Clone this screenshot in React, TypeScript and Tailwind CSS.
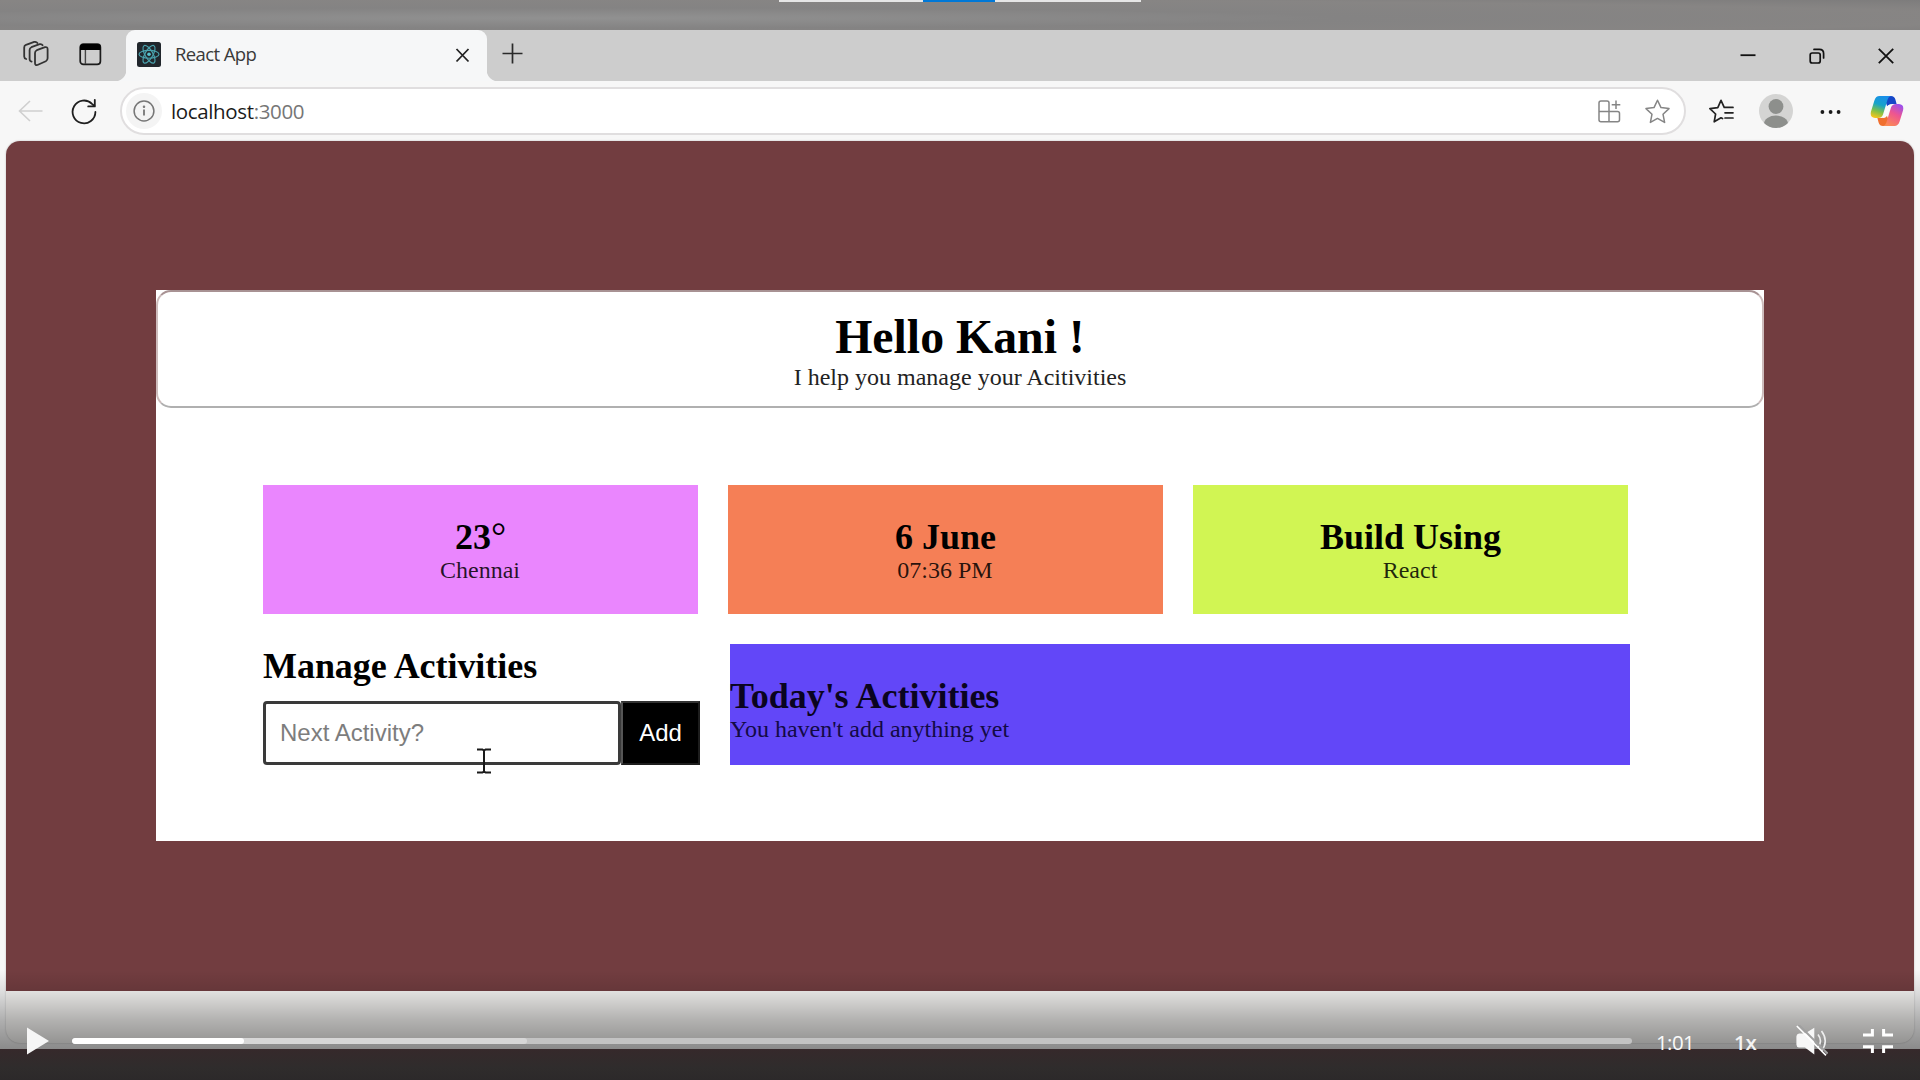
import React from "react";

const serif = "font-['Liberation_Serif',serif]";
const ui = "font-['Open_Sans',sans-serif]";

function WorkspacesIcon() {
  return (
    <svg width="26" height="26" viewBox="0 0 26 26" fill="none" stroke="#333" strokeWidth="1.8" strokeLinejoin="round" strokeLinecap="round">
      <path d="M13.8 9.2 L22 6.2 Q24.6 5.6 24.6 8.2 V17.2 Q24.6 19.2 22.8 20.2 L14.4 24 Q12 24.6 12 22 V12 Q12 10 13.8 9.2 Z" />
      <path d="M8.6 20.6 Q6.6 20.2 6.6 18 V9 Q6.6 7 8.4 6.2 L16.6 3.2 Q18.8 2.8 19.6 4.2" />
      <path d="M3.2 18 Q1.2 17.4 1.2 15.4 V6.4 Q1.2 4.6 3 3.8 L11.2 0.9 Q13.4 0.7 14.4 2" />
    </svg>
  );
}

function VerticalTabsIcon() {
  return (
    <svg width="23" height="23" viewBox="0 0 23 23" fill="none" stroke="#1c1c1c" strokeWidth="1.7">
      <rect x="1.2" y="1.2" width="20.2" height="20.2" rx="3.2" />
      <path d="M1 7 V4 Q1 1 4 1 H18.6 Q21.6 1 21.6 4 V7 Z" fill="#000" stroke="none" />
      <path d="M6.4 7 V21" stroke="#444" strokeWidth="1.4" />
    </svg>
  );
}

function ReactFavicon() {
  return (
    <svg width="24" height="25" viewBox="0 0 24 25">
      <rect width="24" height="25" rx="2.5" fill="#20262c" />
      <g fill="none" stroke="#4aa3ae" strokeWidth="1.15" transform="translate(12 12.3)">
        <ellipse rx="10" ry="3.9" />
        <ellipse rx="10" ry="3.9" transform="rotate(60)" />
        <ellipse rx="10" ry="3.9" transform="rotate(120)" />
        <circle r="1.8" fill="#58c4d0" stroke="none" />
      </g>
    </svg>
  );
}

function CopilotIcon() {
  return (
    <svg width="34" height="32" viewBox="0 0 34 32">
      <defs>
        <linearGradient id="cpA" x1="0.6" y1="0" x2="0.3" y2="1">
          <stop offset="0" stopColor="#1a8fea" />
          <stop offset="0.4" stopColor="#17a3c9" />
          <stop offset="0.7" stopColor="#7cc04a" />
          <stop offset="1" stopColor="#f5c51c" />
        </linearGradient>
        <linearGradient id="cpB" x1="0.8" y1="0" x2="0.3" y2="1">
          <stop offset="0" stopColor="#9a50ee" />
          <stop offset="0.45" stopColor="#ee5590" />
          <stop offset="1" stopColor="#fb8a55" />
        </linearGradient>
      </defs>
      <path d="M16 1 H21 Q24.5 1 25.4 4.5 L26.6 9 H22 Q18.5 9 17.4 12 L15 5 Z" fill="#1647c8" />
      <path d="M18 31 H13 Q9.6 31 8.6 27.5 L7.4 23 H12 Q15.5 23 16.6 20 L19 26 Z" fill="#f0702f" />
      <path d="M9.5 1 H21 Q18.6 1.4 17.6 4.6 L13 19.5 Q11.8 23 8 23 H5 Q-0.4 22.6 1 16.5 L4.4 5.4 Q5.8 1 9.5 1 Z" fill="url(#cpA)" />
      <path d="M24.5 31 H13 Q15.4 30.6 16.4 27.4 L21 12.5 Q22.2 9 26 9 H29 Q34.4 9.4 33 15.5 L29.6 26.6 Q28.2 31 24.5 31 Z" fill="url(#cpB)" />
      <path d="M17.2 11 Q18 9.4 21.6 9.4 L17 21 Q16 23 12.6 23 Z" fill="#fbfbfb" />
    </svg>
  );
}

function TabStrip() {
  return (
    <div className="flex h-[51px] shrink-0 items-stretch bg-[#cdcdcd]">
      <div className="flex w-[126px] items-center gap-[30px] pb-[3px] pl-[23px]">
        <WorkspacesIcon />
        <VerticalTabsIcon />
      </div>
      <div className="relative flex w-[361px] items-center rounded-t-[9px] bg-[#f6f7f8] pb-[3px] pl-[11px] pr-[16px]">
        <svg className="absolute -left-[8px] bottom-0" width="8" height="8"><path d="M8 0 V8 H0 Q6 6 8 0Z" fill="#f6f7f8" /></svg>
        <svg className="absolute -right-[8px] bottom-0" width="8" height="8"><path d="M0 0 V8 H8 Q2 6 0 0Z" fill="#f6f7f8" /></svg>
        <ReactFavicon />
        <span className={`${ui} ml-[14px] flex-1 text-[18.5px] leading-6 tracking-[-0.6px] text-[#3a3a3a]`}>React App</span>
        <svg width="17" height="17" viewBox="0 0 17 17" className="mt-[2px]" stroke="#222" strokeWidth="1.8" fill="none"><path d="M2.5 2 L14.5 14.5 M14.5 2 L2.5 14.5" /></svg>
      </div>
      <div className="flex flex-1 items-center pb-[5px] pl-[15px]">
        <svg width="21" height="21" viewBox="0 0 21 21" stroke="#2a2a2a" strokeWidth="1.7"><path d="M10.5 0.5 V20.5 M0.5 10.5 H20.5" /></svg>
      </div>
      <div className="flex items-center gap-[53px] pr-[26.5px]">
        <svg width="16" height="16" viewBox="0 0 16 16" stroke="#111" strokeWidth="1.8"><path d="M0.5 7.2 H15.5" /></svg>
        <svg width="16" height="16" viewBox="0 0 16 16" stroke="#111" strokeWidth="1.7" fill="none" strokeLinecap="round">
          <rect x="1.2" y="5" width="10" height="10" rx="2" />
          <path d="M5 1.4 H10.4 Q14.6 1.4 14.6 5.6 V10" />
        </svg>
        <svg width="16" height="16" viewBox="0 0 16 16" stroke="#111" strokeWidth="1.8"><path d="M0.8 0.8 L15.2 15.2 M15.2 0.8 L0.8 15.2" /></svg>
      </div>
    </div>
  );
}

function Toolbar() {
  return (
    <div className="flex h-[60px] shrink-0 items-center bg-[#f7f7f7]">
      <svg className="ml-[18px]" width="25" height="22" viewBox="0 0 25 22" fill="none" stroke="#cfcfcf" strokeWidth="1.6"><path d="M24.5 11 H1.5 M12 1 L1.5 11 L12 21" /></svg>
      <svg className="ml-[28px]" width="27" height="27" viewBox="0 0 27 27" fill="none" stroke="#1f1f1f" strokeWidth="1.8" strokeLinecap="round" strokeLinejoin="round">
        <path d="M24.4 14 A11.4 11.4 0 1 1 21 5.8 L23.4 8" />
        <path d="M23.8 1.8 V8.4 H17.2" />
      </svg>
      <div className="ml-[22px] flex h-[48px] w-[1566px] items-center rounded-full border-2 border-[#e0dedf] bg-white pl-[4px]">
        <div className="flex size-[36px] items-center justify-center rounded-full bg-[#f4f4f4]">
          <svg width="22" height="22" viewBox="0 0 22 22" fill="none" stroke="#767676" strokeWidth="1.5"><circle cx="11" cy="11" r="9.9" /><path d="M11 9.6 V15.6" strokeWidth="1.8" /><circle cx="11" cy="6.8" r="0.5" fill="#767676" /></svg>
        </div>
        <span className={`${ui} ml-[9px] -mt-px flex-1 text-[20.5px] leading-6 tracking-[-0.36px] text-[#1b1b1b]`}>localhost<span className="text-[#767676]">:3000</span></span>
        <svg width="23" height="23" viewBox="0 0 23 23" fill="none" stroke="#858585" strokeWidth="1.5">
          <path d="M11 21.8 H3 Q1 21.8 1 19.8 V3 Q1 1 3 1 H9 Q11 1 11 3 V21.8 H19.5 Q21.5 21.8 21.5 19.8 V13.6 Q21.5 11.6 19.5 11.6 H1" />
          <path d="M18 0.5 V9 M13.7 4.8 H22.3" />
        </svg>
        <svg className="ml-[24px] mr-[14px]" width="25" height="25" viewBox="0 0 25 25" fill="none" stroke="#858585" strokeWidth="1.5" strokeLinejoin="round"><path d="M12.5 1.2 L16 8.6 L24 9.6 L18 15.2 L19.6 23.4 L12.5 19.4 L5.4 23.4 L7 15.2 L1 9.6 L9 8.6 Z" /></svg>
      </div>
      <svg className="ml-[23px]" width="25" height="25" viewBox="0 0 25 25" fill="none" stroke="#222" strokeWidth="1.7" strokeLinejoin="round" strokeLinecap="round">
        <path d="M13.5 19.6 L12 18.8 L5.2 22.8 L6.6 15 L0.9 9.6 L8.8 8.6 L12 1.4 L15.2 8.4 H24" />
        <path d="M16 13.8 H24 M16 19 H24" />
      </svg>
      <svg className="ml-[25px]" width="34" height="34" viewBox="0 0 34 34">
        <clipPath id="avatar"><circle cx="17" cy="17" r="17" /></clipPath>
        <g clipPath="url(#avatar)">
          <rect width="34" height="34" fill="#d4d4d3" />
          <circle cx="17" cy="12.5" r="7.4" fill="#8d8f8c" />
          <ellipse cx="17" cy="30" rx="12" ry="8.4" fill="#8d8f8c" />
        </g>
      </svg>
      <svg className="ml-[27px] mt-px" width="22" height="6" viewBox="0 0 22 6" fill="#1a1a1a"><circle cx="2.4" cy="3" r="1.9" /><circle cx="10.6" cy="3" r="1.9" /><circle cx="18.6" cy="3" r="1.9" /></svg>
      <div className="ml-[28px]"><CopilotIcon /></div>
    </div>
  );
}

function InfoCard({ color, title, text }: { color: string; title: React.ReactNode; text: string }) {
  return (
    <div className={`flex h-[129px] w-[435px] flex-col items-center pt-[32px] text-center ${color}`}>
      <h2 className="h-[41px] text-[36px] font-bold leading-[41px] text-black">{title}</h2>
      <p className="-mt-px pr-px text-[24px] leading-[27px] text-black/85">{text}</p>
    </div>
  );
}

function TextCursor() {
  return (
    <svg className="absolute left-[213px] top-[46px]" width="16" height="28" viewBox="0 0 16 28" fill="none" stroke="#1a1a1a" strokeWidth="2">
      <path d="M1 2.5 H6.4 L8 3.6 L9.6 2.5 H15 M8 3 V25 M1 25.5 H6.4 L8 24.4 L9.6 25.5 H15" />
    </svg>
  );
}

function ActivityApp() {
  return (
    <div className={`${serif} h-[551px] w-[1608px] bg-white`}>
      <header className="flex h-[118px] flex-col items-center rounded-[15px] border-2 border-[#b0b0b0] border-x-[#cdbcbc] border-t-[#a89293] pt-[18px]">
        <h1 className="text-[47.8px] font-bold leading-[54px] text-black">Hello Kani !</h1>
        <p className="text-[24px] leading-[27px] text-[#222]">I help you manage your Acitivities</p>
      </header>
      <div className="flex gap-[30px] pl-[107px] pt-[77px]">
        <InfoCard
          color="bg-[#ea86fe]"
          title={<>23<span className="text-[38px] font-normal leading-none">°</span></>}
          text="Chennai"
        />
        <InfoCard color="bg-[#f57f56]" title="6 June" text="07:36 PM" />
        <InfoCard color="bg-[#d1f553]" title="Build Using" text="React" />
      </div>
      <div className="flex pl-[107px] pt-[30px]">
        <div className="w-[467px]">
          <h2 className="pt-[2px] text-[36px] font-bold leading-[41px] tracking-[-0.05px] text-black">Manage Activities</h2>
          <div className="relative mt-[14px] flex font-['Liberation_Sans',sans-serif]">
            <div className="flex h-[64px] w-[358px] items-center rounded-[4px] border-[3px] border-[#3a3a3a] bg-white pl-[14px] pb-px text-[24px] text-[#7d7d7d]">Next Activity?</div>
            <div className="flex h-[64px] w-[79px] items-center justify-center border-2 border-[#1d1d1d] border-l-[#555] border-t-[#333] bg-black pb-px text-[24px] text-white">Add</div>
            <TextCursor />
          </div>
        </div>
        <div className="h-[121px] w-[900px] bg-[#6247f8] pt-[32px]">
          <h2 className="text-[36px] font-bold leading-[41px] tracking-[-0.02px] text-[#0a0420]">Today's Activities</h2>
          <p className="-mt-px text-[24px] leading-[27px] text-[#130a45]">You haven't add anything yet</p>
        </div>
      </div>
    </div>
  );
}

function PlayerControls() {
  return (
    <div className="absolute inset-x-0 bottom-0 h-[110px] bg-[linear-gradient(to_bottom,rgba(0,0,0,0)_0px,rgba(0,0,0,0.1)_21px,rgba(0,0,0,0.29)_50px,rgba(0,0,0,0.44)_79px,rgba(0,0,0,0)_79px)]">
      <div className="flex h-full items-start pl-[27px] pt-[55px]">
        <svg className="mt-[2px]" width="22" height="28" viewBox="0 0 22 28" fill="#f6f6f6"><path d="M0 0.5 L22 14 L0 27.5 Z" /></svg>
        <div className="ml-[23px] mt-[13px] h-[6px] w-[1560px] overflow-hidden rounded-full bg-[#c3c3c3]">
          <div className="h-full w-[455px] rounded-full bg-[#d7d7d7]">
            <div className="h-full w-[172px] rounded-full bg-white" />
          </div>
        </div>
        <span className={`${ui} ml-[24px] mt-[3px] w-[78px] text-[20.5px] leading-7 tracking-[-0.6px] text-[#fafafa]`}>1:01</span>
        <span className={`${ui} mt-[3px] w-[62px] text-[20.5px] font-semibold leading-7 tracking-[-0.3px] text-[#f3f3f3]`}>1x</span>
        <svg width="32" height="32" viewBox="0 0 32 32" fill="none">
          <path d="M3 8.5 H9 L18.3 2.8 V29.5 L9 22.5 H3 Q0.4 22 0.4 19.5 V11.5 Q0.4 9 3 8.5 Z" fill="#f7f7f7" />
          <path d="M22 9.6 Q27 16 22 22.4 M25.5 6 Q33 16 25.5 26" stroke="#eee" strokeWidth="1.6" />
          <path d="M2.4 -0.4 L31.6 28.6" stroke="#a0a0a0" strokeWidth="2" />
          <path d="M0.8 1 L30 30.4" stroke="#fff" strokeWidth="1.6" />
        </svg>
        <svg className="ml-[35px] mt-[4px]" width="30" height="24" viewBox="0 0 30 24" fill="none" stroke="#fff" strokeWidth="3"><path d="M9.4 0 V6 H0 M20.6 0 V6 H30 M9.4 24 V17.8 H0 M20.6 24 V17.8 H30" /></svg>
      </div>
    </div>
  );
}

export default function App() {
  return (
    <div className="relative flex h-[1080px] w-[1920px] flex-col overflow-hidden bg-[#f7f7f7]">
      <div className="flex h-[30px] shrink-0 justify-center bg-[radial-gradient(ellipse_at_30%_60%,#919191,#848383_40%,#878584_75%,#7d7c7c)]">
        <div className="flex h-[2px] w-[362px] justify-center bg-[#e6e6e6]"><div className="mr-[2px] h-full w-[72px] bg-[#0078d7]" /></div>
      </div>
      <TabStrip />
      <Toolbar />
      <main className="mx-[6px] flex h-[902px] shrink-0 flex-col overflow-hidden rounded-[14px] bg-[#fbfaf8] shadow-[0_0_2px_rgba(0,0,0,0.25)]">
        <div className="h-[850px] shrink-0 bg-[#723d40] pl-[150px] pt-[149px]">
          <ActivityApp />
        </div>
      </main>
      <div className="mt-[6px] h-[31px] shrink-0 bg-[linear-gradient(#36292b,#2f2c2c_60%,#2c292a)]" />
      <PlayerControls />
    </div>
  );
}
